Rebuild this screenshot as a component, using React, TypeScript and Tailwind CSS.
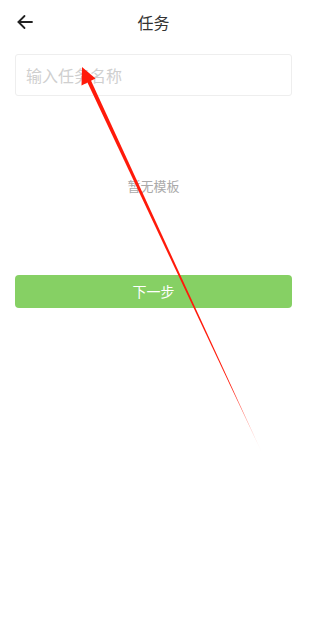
import React, { useState } from 'react'

const font = { fontFamily: '"Noto Sans CJK SC", "Noto Sans", sans-serif' }

const BackIcon: React.FC = () => (
  <svg width="18" height="18" viewBox="0 0 18 18" fill="none" stroke="#222" strokeWidth="1.8" strokeLinecap="round" strokeLinejoin="round">
    <path d="M16 9H2.5" />
    <path d="M8.5 3L2.5 9l6 6" />
  </svg>
)

// red annotation arrow drawn over the page
const Annotation: React.FC = () => (
  <svg className="pointer-events-none absolute inset-0" width="307" height="617" viewBox="0 0 307 617">
    <defs>
      <linearGradient id="fade" x1="82" y1="68" x2="263" y2="455" gradientUnits="userSpaceOnUse">
        <stop offset="0" stopColor="#ff1a0a" stopOpacity="1" />
        <stop offset="0.82" stopColor="#ff1a0a" stopOpacity="1" />
        <stop offset="1" stopColor="#ff1a0a" stopOpacity="0" />
      </linearGradient>
    </defs>
    <polygon points="86.6,80.8 90.4,79.2 263,455" fill="url(#fade)" />
    <polygon points="82,67 81.5,85.5 95.5,78.5" fill="#ff1a0a" />
  </svg>
)

const App: React.FC = () => {
  const [name, setName] = useState('')

  return (
    <div className="relative w-[307px] h-[617px] bg-white overflow-hidden" style={font}>
      <div className="h-[43px] flex items-center px-[13px] relative">
        <button className="w-6 h-6 flex items-center justify-center"><BackIcon /></button>
        <span className="absolute left-0 right-0 text-center text-[16px] text-[#333] pointer-events-none">任务</span>
      </div>

      <div className="px-[15px] pt-[11px]">
        <input
          value={name}
          onChange={(e) => setName(e.target.value)}
          placeholder="输入任务名称"
          className="w-full h-[42px] px-[10px] text-[16px] border border-[#eeeeee] rounded-[3px] placeholder:text-[#cfcfcf] focus:outline-none"
        />
      </div>

      <p className="mt-[80px] text-center text-[13px] text-[#aaaaaa] leading-[20px]">暂无模板</p>

      <div className="px-[15px] mt-[79px]">
        <button className="w-full h-[33px] rounded-[4px] bg-[#86d064] text-white text-[14px]">下一步</button>
      </div>

      <Annotation />
    </div>
  )
}

export default App
